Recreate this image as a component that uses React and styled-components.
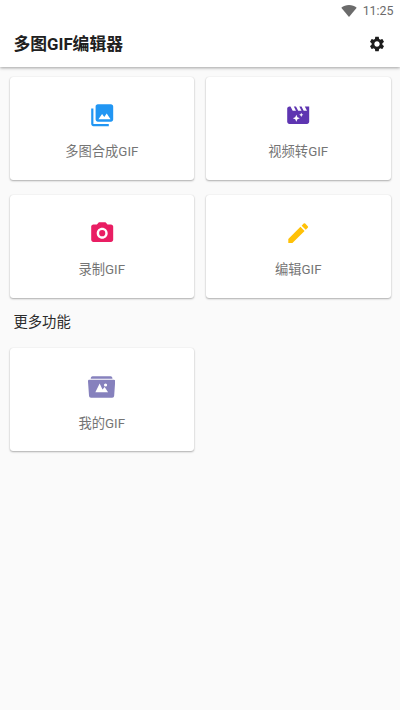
import React from 'react'
import styled, { createGlobalStyle } from 'styled-components'

const GlobalStyle = createGlobalStyle`
    * {
        box-sizing: border-box;
    }

    body {
        margin: 0;
        background: #fafafa;
        font-family: Roboto, 'Noto Sans CJK SC', sans-serif;
    }
`

const Screen = styled.div`
    display: flex;
    flex-direction: column;
    width: 400px;
    height: 710px;
    overflow: hidden;
    background: #fafafa;
`

const Header = styled.header`
    height: 67px;
    flex-shrink: 0;
    background: #ffffff;
    box-shadow: 0 1px 3px rgba(0, 0, 0, 0.36);
`

const StatusBar = styled.div`
    display: flex;
    align-items: center;
    justify-content: flex-end;
    gap: 6px;
    height: 21px;
    padding-right: 6.5px;
`

const Time = styled.span`
    font-size: 12.4px;
    line-height: 21px;
    color: #6b6b6b;
`

const Toolbar = styled.div`
    display: flex;
    align-items: center;
    justify-content: space-between;
    height: 46px;
    padding: 0 14px 0 13.5px;
`

const Title = styled.h1`
    margin: 0;
    font-weight: 700;
    font-size: 16.8px;
    line-height: 24px;
    color: #202020;
`

const IconButton = styled.button`
    display: flex;
    padding: 0;
    border: 0;
    background: none;
    color: #1c1c1c;
`

const Content = styled.main`
    padding: 10px 9px 0 9.5px;
`

const Grid = styled.div`
    display: grid;
    grid-template-columns: 184.5px 184.5px;
    grid-auto-rows: 103px;
    column-gap: 12px;
    row-gap: 15px;
`

const Card = styled.div`
    display: flex;
    flex-direction: column;
    align-items: center;
    padding-top: 25px;
    border-radius: 3px;
    background: #ffffff;
    box-shadow: 0 1px 2px rgba(0, 0, 0, 0.3), 0 0 1px rgba(0, 0, 0, 0.14);
`

const Icon = styled.svg`
    display: block;
    width: ${props => props.$size || 26.4}px;
    height: ${props => props.$size || 26.4}px;
    fill: ${props => props.$color || 'currentColor'};
`

const Label = styled.span`
    margin-top: 13.6px;
    font-size: 13.3px;
    line-height: 20px;
    color: #757575;
`

const SectionTitle = styled.h2`
    margin: 0 0 0 4px;
    height: 50px;
    font-weight: 400;
    font-size: 14.3px;
    line-height: 48px;
    color: #2b2b2b;
`

const icons = {
    images: 'M22 16V4c0-1.1-.9-2-2-2H8c-1.1 0-2 .9-2 2v12c0 1.1.9 2 2 2h12c1.1 0 2-.9 2-2zM8.6 15.7l3.3-4.7 2 2.7 2.2-3.3 3.5 5.3zM2 6v14c0 1.1.9 2 2 2h14v-2H4V6H2z',
    video: 'M18 4l2 4h-3l-2-4h-2l2 4h-3l-2-4H8l2 4H7L5 4H4c-1.1 0-1.99.9-1.99 2L2 18c0 1.1.9 2 2 2h16c1.1 0 2-.9 2-2V4h-4zM10.3 11.6l1 2.2 2.2 1-2.2 1-1 2.2-1-2.2-2.2-1 2.2-1zM14.8 9.8l.6 1.3 1.3.6-1.3.6-.6 1.3-.6-1.3-1.3-.6 1.3-.6z',
    camera: 'M12 9.2a2.8 2.8 0 1 0 0 5.6a2.8 2.8 0 1 0 0-5.6zM9 2L7.17 4H4c-1.1 0-2 .9-2 2v12c0 1.1.9 2 2 2h16c1.1 0 2-.9 2-2V6c0-1.1-.9-2-2-2h-3.17L15 2H9zm3 15c-2.76 0-5-2.24-5-5s2.24-5 5-5 5 2.24 5 5-2.24 5-5 5z',
    pencil: 'M3 17.25V21h3.75L17.81 9.94l-3.75-3.75L3 17.25zM20.71 7.04a.996.996 0 0 0 0-1.41l-2.34-2.34a.996.996 0 0 0-1.41 0l-1.83 1.83 3.75 3.75 1.83-1.83z',
    folder: 'M2.4 5.1c0-1.5.5-2.3 1.7-2.3h15.8c1.2 0 1.7.8 1.7 2.3zM1.2 6h21.6c.9 0 1.3.6 1.2 1.4l-.9 12.7c-.1 1.1-.7 1.7-1.8 1.7H2.7c-1.1 0-1.7-.6-1.8-1.7L0 7.4C-.1 6.6.3 6 1.2 6zM6.5 16.9h11.2l-3-4.5-1.9 2.1-2.5-5.3zM15.5 9.2a1.4 1.4 0 1 0 0 2.8a1.4 1.4 0 1 0 0-2.8z',
    settings: 'M19.14 12.94c.04-.3.06-.61.06-.94 0-.32-.02-.64-.07-.94l2.03-1.58c.18-.14.23-.41.12-.61l-1.92-3.32c-.12-.22-.37-.29-.59-.22l-2.39.96c-.5-.38-1.03-.7-1.62-.94l-.36-2.54c-.04-.24-.24-.41-.48-.41h-3.84c-.24 0-.43.17-.47.41l-.36 2.54c-.59.24-1.13.57-1.62.94l-2.39-.96c-.22-.08-.47 0-.59.22L2.74 8.87c-.12.21-.08.47.12.61l2.03 1.58c-.05.3-.09.63-.09.94s.02.64.07.94l-2.03 1.58c-.18.14-.23.41-.12.61l1.92 3.32c.12.22.37.29.59.22l2.39-.96c.5.38 1.03.7 1.62.94l.36 2.54c.05.24.24.41.48.41h3.84c.24 0 .44-.17.47-.41l.36-2.54c.59-.24 1.13-.56 1.62-.94l2.39.96c.22.08.47 0 .59-.22l1.92-3.32c.12-.22.07-.47-.12-.61l-2.01-1.58zM12 15.6c-1.98 0-3.6-1.62-3.6-3.6s1.62-3.6 3.6-3.6 3.6 1.62 3.6 3.6-1.62 3.6-3.6 3.6z'
}

const tools = [
    { name: '多图合成GIF', icon: 'images', color: '#2196f3' },
    { name: '视频转GIF', icon: 'video', color: '#5e35b1' },
    { name: '录制GIF', icon: 'camera', color: '#e91e63' },
    { name: '编辑GIF', icon: 'pencil', color: '#ffc107' }
]

const more = [{ name: '我的GIF', icon: 'folder', color: '#8681bd', size: 27.2 }]

function Glyph({ name, color, size }) {
    return (
        <Icon viewBox='0 0 24 24' $color={color} $size={size}>
            <path fillRule='evenodd' d={icons[name]} />
        </Icon>
    )
}

function ToolGrid({ items }) {
    return (
        <Grid>
            {items.map(({ name, icon, color, size }) => (
                <Card key={name}>
                    <Glyph name={icon} color={color} size={size} />
                    <Label>{name}</Label>
                </Card>
            ))}
        </Grid>
    )
}

export default function App() {
    return (
        <Screen>
            <GlobalStyle />
            <Header>
                <StatusBar>
                    <svg width='16' height='12' viewBox='0 0 16 12'>
                        <path fill='#6b6b6b' d='M8 12L.3 2.7C2.5 1 5.1 0 8 0s5.5 1 7.7 2.7z' />
                    </svg>
                    <Time>11:25</Time>
                </StatusBar>
                <Toolbar>
                    <Title>多图GIF编辑器</Title>
                    <IconButton aria-label='设置'>
                        <Glyph name='settings' size={18} />
                    </IconButton>
                </Toolbar>
            </Header>
            <Content>
                <ToolGrid items={tools} />
                <SectionTitle>更多功能</SectionTitle>
                <ToolGrid items={more} />
            </Content>
        </Screen>
    )
}
